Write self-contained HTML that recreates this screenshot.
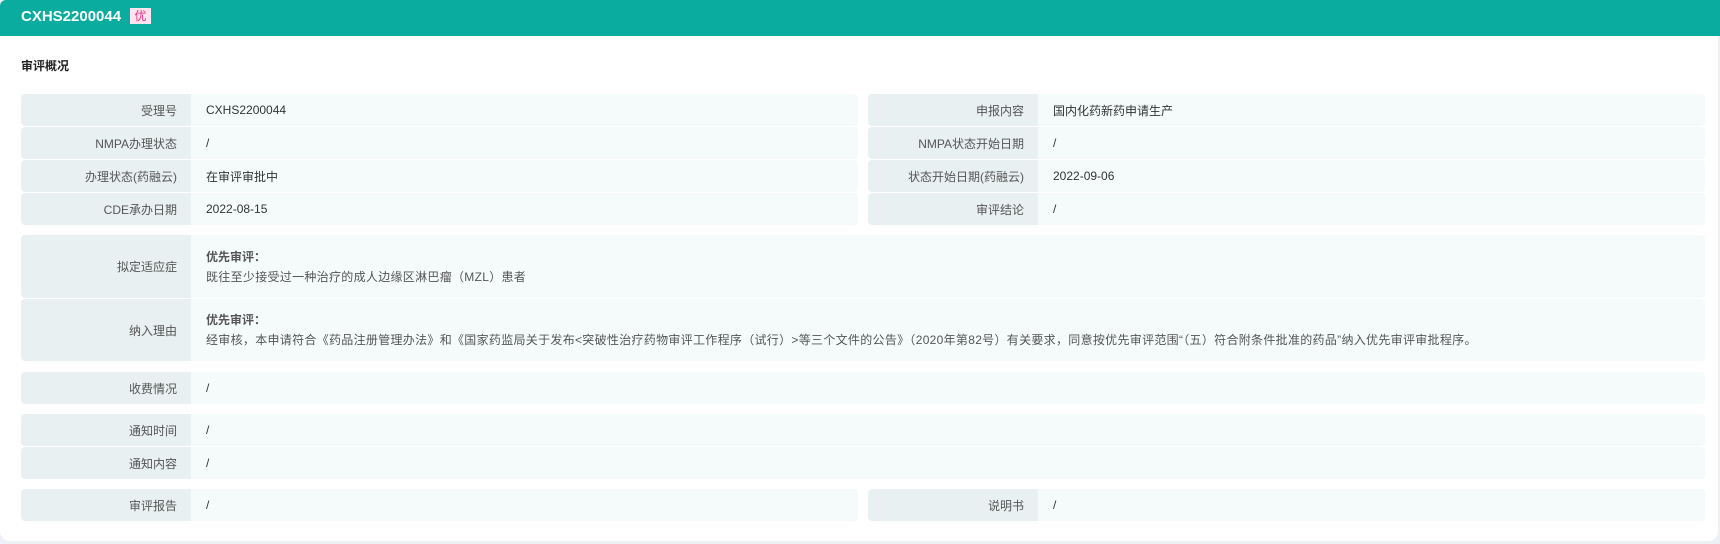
<!DOCTYPE html>
<html><head><meta charset="utf-8">
<style>
*{margin:0;padding:0;box-sizing:border-box}
html,body{width:1720px;height:544px;overflow:hidden;background:#edf1f6;font-family:"Liberation Sans","Noto Sans CJK SC",sans-serif;font-size:12px;color:#333}
.hdr{position:absolute;left:0;top:0;width:1720px;height:36px;background:#0aac9f;border-radius:6px 0 0 0}
.hdr .t{position:absolute;left:21px;top:8px;color:#fff;font-weight:bold;font-size:15px;line-height:18px}
.hdr .b{position:absolute;left:130px;top:8px;width:21px;height:16px;background:#fde4ef;color:#e8307c;font-size:12px;line-height:16px;text-align:center}
.card{position:absolute;left:0;top:36px;width:1718px;height:505px;background:#fff;border-radius:0 0 10px 10px}
.title{position:absolute;left:21px;top:58px;font-size:12px;font-weight:bold;color:#222;line-height:16px}
.row{position:absolute;display:flex;height:32px;border-radius:4px;overflow:hidden}
.l{width:170px;background:#e8f0f1;color:#555;text-align:right;padding-right:14px;display:flex;align-items:center;justify-content:flex-end}
.v{flex:1;background:#f5fbfb;padding-left:15px;display:flex;align-items:center;color:#333}
.tall .v{flex-direction:column;align-items:flex-start;justify-content:center}
.tall .v div{line-height:20px}
.tall .v b{color:#555}
.tall .v span{color:#555}
.wide{letter-spacing:0.3px}
</style></head><body>
<div class="hdr"><div class="t">CXHS2200044</div><div class="b">优</div></div>
<div class="card"></div>
<div class="title">审评概况</div>

<div class="row" style="left:21px;top:94px;width:837px"><div class="l">受理号</div><div class="v">CXHS2200044</div></div>
<div class="row" style="left:868px;top:94px;width:837px"><div class="l">申报内容</div><div class="v">国内化药新药申请生产</div></div>
<div class="row" style="left:21px;top:127px;width:837px"><div class="l">NMPA办理状态</div><div class="v">/</div></div>
<div class="row" style="left:868px;top:127px;width:837px"><div class="l">NMPA状态开始日期</div><div class="v">/</div></div>
<div class="row" style="left:21px;top:160px;width:837px"><div class="l">办理状态(药融云)</div><div class="v">在审评审批中</div></div>
<div class="row" style="left:868px;top:160px;width:837px"><div class="l">状态开始日期(药融云)</div><div class="v">2022-09-06</div></div>
<div class="row" style="left:21px;top:193px;width:837px"><div class="l">CDE承办日期</div><div class="v">2022-08-15</div></div>
<div class="row" style="left:868px;top:193px;width:837px"><div class="l">审评结论</div><div class="v">/</div></div>

<div class="row tall" style="left:21px;top:235px;width:1684px;height:63px"><div class="l">拟定适应症</div><div class="v"><div><b>优先审评：</b></div><div><span class="wide">既往至少接受过一种治疗的成人边缘区淋巴瘤（MZL）患者</span></div></div></div>
<div class="row tall" style="left:21px;top:299px;width:1684px;height:62px"><div class="l">纳入理由</div><div class="v"><div><b>优先审评：</b></div><div><span class="wide">经审核，本申请符合《药品注册管理办法》和《国家药监局关于发布&lt;突破性治疗药物审评工作程序（试行）&gt;等三个文件的公告》（2020年第82号）有关要求，同意按优先审评范围“（五）符合附条件批准的药品”纳入优先审评审批程序。</span></div></div></div>

<div class="row" style="left:21px;top:372px;width:1684px"><div class="l">收费情况</div><div class="v">/</div></div>
<div class="row" style="left:21px;top:414px;width:1684px"><div class="l">通知时间</div><div class="v">/</div></div>
<div class="row" style="left:21px;top:447px;width:1684px"><div class="l">通知内容</div><div class="v">/</div></div>

<div class="row" style="left:21px;top:489px;width:837px"><div class="l">审评报告</div><div class="v">/</div></div>
<div class="row" style="left:868px;top:489px;width:837px"><div class="l">说明书</div><div class="v">/</div></div>
</body></html>
